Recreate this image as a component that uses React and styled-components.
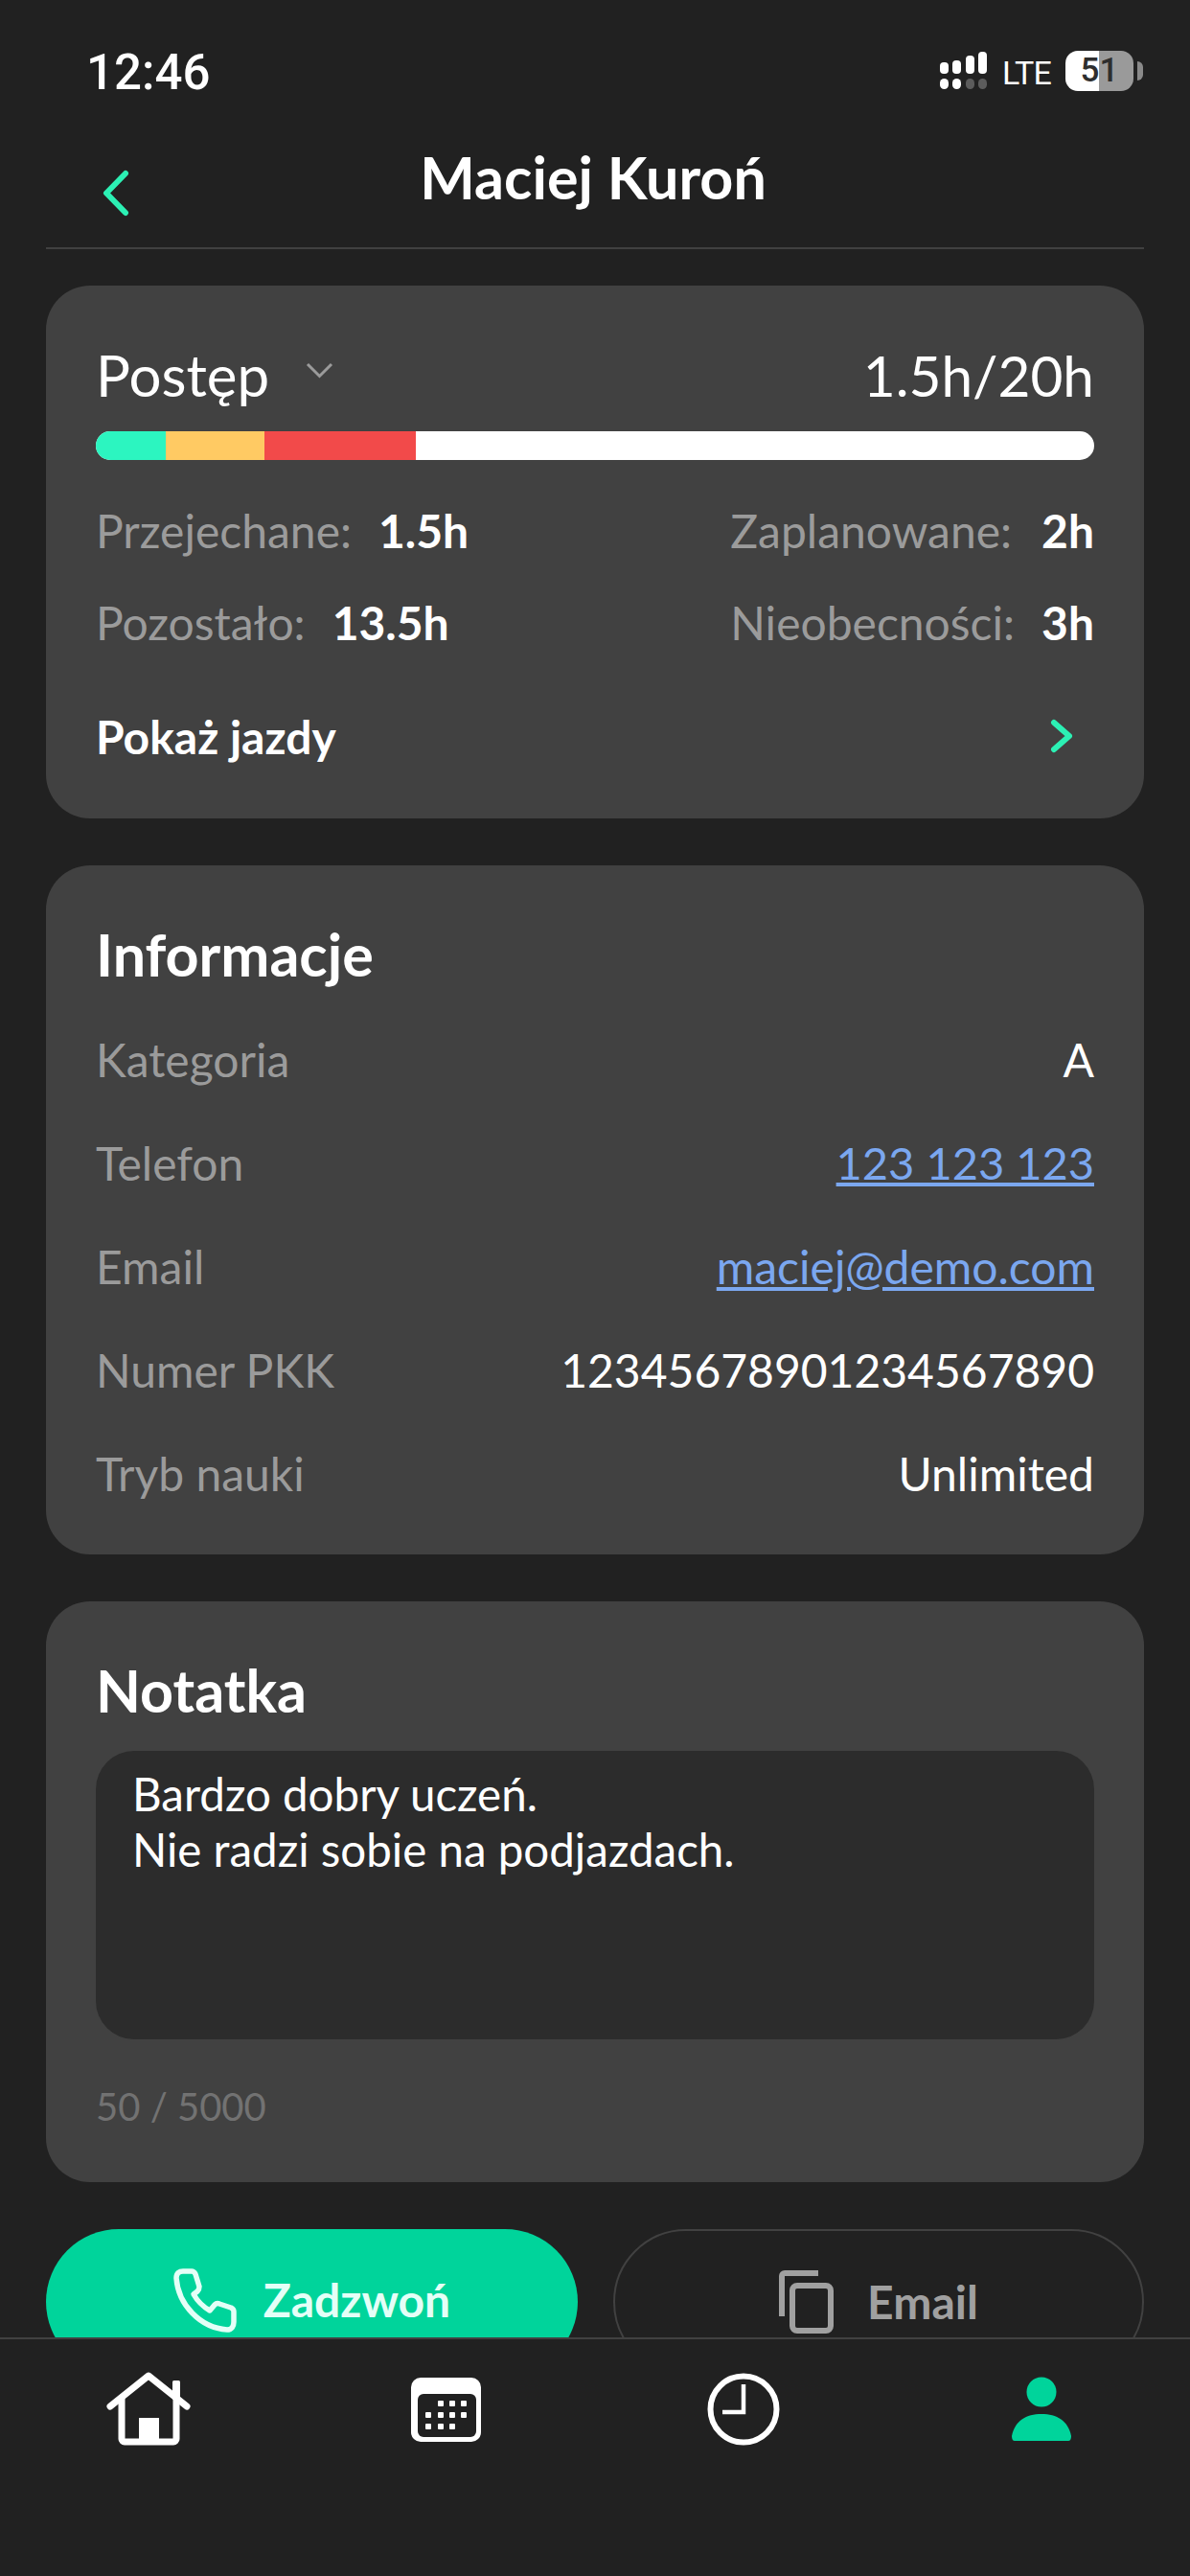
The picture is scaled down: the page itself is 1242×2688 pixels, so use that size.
import React from "react";
import styled, { createGlobalStyle } from "styled-components";

const GlobalStyle = createGlobalStyle`
  html, body { margin: 0; padding: 0; background: #212121; }
  * { box-sizing: border-box; }
`;

const Screen = styled.div`
  width: 1242px;
  height: 2688px;
  display: flex;
  flex-direction: column;
  overflow: hidden;
  background: #212121;
  color: #fff;
  font-family: Lato, "Noto Sans", sans-serif;
`;

const StatusBar = styled.div`
  height: 120px;
  flex: none;
  padding: 47px 59px 0 90px;
  display: flex;
  justify-content: space-between;
  align-items: flex-start;
`;

const Time = styled.div`
  font-family: Roboto, sans-serif;
  font-weight: 500;
  font-size: 51px;
  line-height: 52px;
  margin-top: 3px;
`;

const StatusIcons = styled.div`
  display: flex;
  align-items: center;
  gap: 15px;
  height: 42px;
  margin-top: 6px;
`;

const Lte = styled.span`
  font-family: Roboto, sans-serif;
  font-size: 34px;
  letter-spacing: -0.8px;
  line-height: 40px;
  margin-top: 3px;
`;

const Battery = styled.div`
  position: relative;
  width: 71px;
  height: 42px;
  border-radius: 13px;
  background: linear-gradient(90deg, #fff 0 50%, #9a9a9a 50% 100%);
  color: #2e2e2e;
  font-family: Roboto, sans-serif;
  font-weight: 500;
  font-size: 35px;
  line-height: 42px;
  text-align: center;
  &::after {
    content: "";
    position: absolute;
    right: -10px;
    top: 11px;
    width: 6px;
    height: 20px;
    border-radius: 0 10px 10px 0;
    background: #8a8a8a;
  }
`;

const Header = styled.header`
  flex: none;
  margin: 0 48px;
  height: 140px;
  border-bottom: 2px solid #414141;
  display: grid;
  grid-template-columns: 1fr auto 1fr;
  align-items: start;
`;

const Title = styled.h1`
  margin: 0;
  padding: 30px 4px 0 0;
  font-size: 61px;
  line-height: 70px;
  font-weight: 700;
`;

const BackButton = styled.div`
  margin: 57px 0 0 59px;
  line-height: 0;
`;

const Content = styled.main`
  flex: 1;
  min-height: 0;
  overflow: hidden;
  padding: 38px 48px 0;
  display: flex;
  flex-direction: column;
  gap: 49px;
`;

const Card = styled.section`
  flex: none;
  background: #414141;
  border-radius: 46px;
  padding: 0 52px;
  height: ${(p) => p.$height}px;
`;

const ProgressHead = styled.div`
  display: flex;
  justify-content: space-between;
  align-items: center;
  padding-top: 33px;
  height: 152px;
  font-size: 60px;
`;

const ProgressLabel = styled.div`
  display: flex;
  align-items: center;
  gap: 38px;
`;

const ProgressTotal = styled.span`
  font-size: 58.5px;
`;

const DownIcon = styled.svg`
  margin-bottom: 8px;
`;

const Bar = styled.div`
  display: flex;
  height: 30px;
  border-radius: 15px;
  overflow: hidden;
  background: #fff;
`;

const Segment = styled.div`
  width: ${(p) => p.$width}px;
  background: ${(p) => p.$color};
`;

const StatGrid = styled.div`
  display: grid;
  grid-template-columns: 1fr auto;
  grid-auto-rows: 96px;
  padding-top: 25px;
`;

const Stat = styled.div`
  display: flex;
  align-items: center;
  justify-content: ${(p) => (p.$right ? "space-between" : "flex-start")};
  gap: 28px;
  font-size: 48px;
  color: #9b9b9b;
`;

const StatValue = styled.b`
  color: #fff;
  font-weight: 700;
`;

const ShowRides = styled.div`
  display: flex;
  justify-content: space-between;
  align-items: center;
  height: 60px;
  margin-top: 41px;
  padding-right: 22px;
  font-size: 48px;
  font-weight: 700;
`;

const CardTitle = styled.h2`
  margin: 0;
  padding-top: 58px;
  font-size: 61px;
  line-height: 70px;
  font-weight: 700;
`;

const InfoList = styled.div`
  margin-top: 20px;
`;

const InfoRow = styled.div`
  display: flex;
  justify-content: space-between;
  align-items: center;
  height: 108px;
  font-size: 48px;
`;

const InfoLabel = styled.span`
  color: #9b9b9b;
`;

const InfoLink = styled.a`
  color: #7ba7ef;
  text-decoration: underline;
  font-size: ${(p) => p.$size || 48}px;
`;

const NoteBox = styled.div`
  margin-top: 28px;
  height: 301px;
  background: #2c2c2c;
  border-radius: 40px;
  padding: 16px 38px;
  font-size: 47.5px;
  line-height: 58px;
`;

const Counter = styled.div`
  margin-top: 45px;
  font-size: 40px;
  line-height: 50px;
  color: #727272;
`;

const Actions = styled.div`
  flex: none;
  display: grid;
  grid-template-columns: 555px 554px;
  justify-content: space-between;
`;

const ActionButton = styled.button`
  height: 152px;
  border-radius: 76px;
  border: ${(p) => (p.$primary ? "none" : "2px solid #414141")};
  background: ${(p) => (p.$primary ? "#00d49b" : "transparent")};
  color: ${(p) => (p.$primary ? "#e4fff7" : "#a0a0a0")};
  font-family: inherit;
  font-size: 48px;
  font-weight: 700;
  display: flex;
  align-items: flex-start;
  justify-content: center;
  gap: ${(p) => (p.$primary ? 28 : 35)}px;
  padding: 41px 0 0;
`;

const ActionText = styled.span`
  line-height: 60px;
  margin-top: 3px;
`;

const Nav = styled.nav`
  flex: none;
  height: 249px;
  border-top: 2px solid #414141;
  background: #212121;
  display: grid;
  grid-template-columns: repeat(4, 1fr);
  grid-auto-rows: 78px;
  justify-items: center;
  align-items: center;
  padding-top: 34px;
`;

const Chevron = ({ dir = "right", color = "#2cf0b4", w = 24, h = 36, sw = 6 }) => {
  const i = sw / 2 + 1;
  const d =
    dir === "right"
      ? `M${i} ${i} L${w - i} ${h / 2} L${i} ${h - i}`
      : `M${w - i} ${i} L${i} ${h / 2} L${w - i} ${h - i}`;
  return (
    <svg width={w} height={h} viewBox={`0 0 ${w} ${h}`} fill="none" stroke={color} strokeWidth={sw} strokeLinecap="round" strokeLinejoin="round">
      <path d={d} />
    </svg>
  );
};

const Signal = () => (
  <svg width="50" height="40" viewBox="0 0 50 40" fill="#fff">
    <rect x="0" y="11" width="9" height="12" rx="4" />
    <rect x="13" y="9" width="9" height="14" rx="4" />
    <rect x="27" y="4" width="9" height="19" rx="4" />
    <rect x="40" y="0" width="9" height="23" rx="4" />
    <rect x="0" y="28" width="9" height="11" rx="4.5" />
    <rect x="13" y="28" width="9" height="11" rx="4.5" />
    <rect x="27" y="28" width="9" height="11" rx="4.5" fill="#5c5c5c" />
    <rect x="40" y="28" width="9" height="11" rx="4.5" fill="#5c5c5c" />
  </svg>
);

const PhoneIcon = () => (
  <svg width="66" height="67" viewBox="0 0 66 67" fill="none" stroke="#e4fff7" strokeWidth="5.5" strokeLinejoin="round">
    <path d="M3 10 C3 5 6 3 10 3 H19 C21 3 22 4 23 6 L27 19 C27 21 27 22 25 24 L21 27 C25 34 31 40 38 44 L43 38 C44 37 46 36 48 37 L60 41 C62 42 63 43 63 45 V56 C63 60 61 64 56 64 C28 62 5 38 3 10 Z" />
  </svg>
);

const CopyIcon = () => (
  <svg width="57" height="66" viewBox="0 0 57 66" fill="none" stroke="#a0a0a0" strokeWidth="6">
    <path d="M3 48 V6 A3 3 0 0 1 6 3 H41" />
    <rect x="14" y="16" width="40" height="47" rx="5" />
  </svg>
);

const HomeIcon = () => (
  <svg width="88" height="78" viewBox="0 0 88 78" fill="none" stroke="#fff" strokeWidth="7" strokeLinecap="round" strokeLinejoin="round">
    <rect x="69" y="9" width="8" height="20" rx="1.5" fill="#fff" stroke="none" />
    <path d="M4 36 L44 4 L84 36" />
    <path d="M16 28 V70 A3 3 0 0 0 19 73 H70 A3 3 0 0 0 73 70 V28" />
    <rect x="34" y="48" width="21" height="26" fill="#fff" stroke="none" />
  </svg>
);

const CalendarIcon = () => {
  const dots = [
    [28, 24], [40, 24], [52, 24],
    [15, 36], [28, 36], [40, 36], [52, 36],
    [15, 48], [28, 48], [40, 48],
  ];
  return (
    <svg width="73" height="67" viewBox="0 0 73 67">
      <rect x="0" y="0" width="73" height="67" rx="10" fill="#fff" />
      <rect x="7" y="17" width="61" height="45" rx="6" fill="#212121" />
      {dots.map(([x, y]) => (
        <rect key={`${x}-${y}`} x={x} y={y} width="6" height="6" rx="1" fill="#fff" />
      ))}
    </svg>
  );
};

const ClockIcon = () => (
  <svg width="76" height="76" viewBox="0 0 76 76" fill="none" stroke="#fff">
    <circle cx="38" cy="38" r="34.5" strokeWidth="6" />
    <path d="M38 12 V41 H16" strokeWidth="4.5" />
  </svg>
);

const PersonIcon = () => (
  <svg width="64" height="68" viewBox="0 0 64 68" fill="#00d49b">
    <circle cx="32" cy="16" r="15.5" />
    <path d="M1 62 C4 46 16 39 32 39 C48 39 60 46 63 62 C63 65 62 67 60 67 H4 C2 67 1 65 1 62 Z" />
  </svg>
);

const stats = [
  { label: "Przejechane:", value: "1.5h" },
  { label: "Zaplanowane:", value: "2h", right: true },
  { label: "Pozostało:", value: "13.5h" },
  { label: "Nieobecności:", value: "3h", right: true },
];

const App = () => (
  <Screen>
    <GlobalStyle />
    <StatusBar>
      <Time>12:46</Time>
      <StatusIcons>
        <Signal />
        <Lte>LTE</Lte>
        <Battery>51</Battery>
      </StatusIcons>
    </StatusBar>

    <Header>
      <BackButton>
        <Chevron dir="left" w={28} h={49} sw={6} />
      </BackButton>
      <Title>Maciej Kuroń</Title>
    </Header>

    <Content>
      <Card $height={556}>
        <ProgressHead>
          <ProgressLabel>
            Postęp
            <DownIcon width="29" height="17" viewBox="0 0 29 17" fill="none" stroke="#9b9b9b" strokeWidth="3">
              <path d="M2 2 L14.5 14.5 L27 2" />
            </DownIcon>
          </ProgressLabel>
          <ProgressTotal>1.5h/20h</ProgressTotal>
        </ProgressHead>
        <Bar>
          <Segment $width={73} $color="#2cf5c0" />
          <Segment $width={103} $color="#ffca63" />
          <Segment $width={158} $color="#f24a4a" />
        </Bar>
        <StatGrid>
          {stats.map((s) => (
            <Stat key={s.label} $right={s.right}>
              {s.label}
              <StatValue>{s.value}</StatValue>
            </Stat>
          ))}
        </StatGrid>
        <ShowRides>
          Pokaż jazdy
          <Chevron />
        </ShowRides>
      </Card>

      <Card $height={719}>
        <CardTitle>Informacje</CardTitle>
        <InfoList>
          <InfoRow><InfoLabel>Kategoria</InfoLabel><span>A</span></InfoRow>
          <InfoRow><InfoLabel>Telefon</InfoLabel><InfoLink $size={47}>123 123 123</InfoLink></InfoRow>
          <InfoRow><InfoLabel>Email</InfoLabel><InfoLink>maciej@demo.com</InfoLink></InfoRow>
          <InfoRow><InfoLabel>Numer PKK</InfoLabel><span>12345678901234567890</span></InfoRow>
          <InfoRow><InfoLabel>Tryb nauki</InfoLabel><span>Unlimited</span></InfoRow>
        </InfoList>
      </Card>

      <Card $height={606}>
        <CardTitle>Notatka</CardTitle>
        <NoteBox>
          Bardzo dobry uczeń.
          <br />
          Nie radzi sobie na podjazdach.
        </NoteBox>
        <Counter>50 / 5000</Counter>
      </Card>

      <Actions>
        <ActionButton $primary>
          <PhoneIcon />
          <ActionText>Zadzwoń</ActionText>
        </ActionButton>
        <ActionButton>
          <CopyIcon />
          <ActionText>Email</ActionText>
        </ActionButton>
      </Actions>
    </Content>

    <Nav>
      <HomeIcon />
      <CalendarIcon />
      <ClockIcon />
      <PersonIcon />
    </Nav>
  </Screen>
);

export default App;
